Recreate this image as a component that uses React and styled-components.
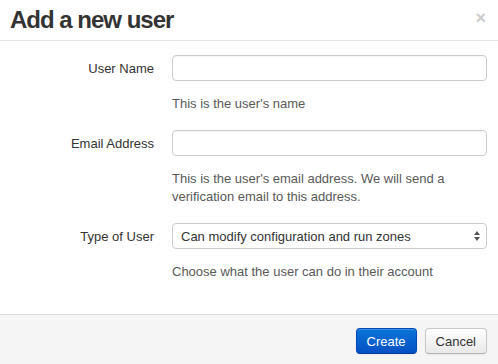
import React from 'react';
import styled, { createGlobalStyle } from 'styled-components';

const GlobalStyle = createGlobalStyle`
  html, body {
    margin: 0;
    padding: 0;
    background: #fff;
  }
  body {
    font-family: "Liberation Sans", Arial, Helvetica, sans-serif;
    font-size: 13px;
    color: #333;
  }
`;

const Modal = styled.div`
  display: flex;
  flex-direction: column;
  min-height: 100vh;
  background: #fff;
`;

const Header = styled.div`
  display: flex;
  align-items: center;
  justify-content: space-between;
  height: 40px;
  padding: 0 12px 0 10px;
  border-bottom: 1px solid #e5e5e5;
`;

const Title = styled.h3`
  margin: 0;
  font-size: 24px;
  font-weight: bold;
  letter-spacing: -1px;
  color: #333;
  line-height: 40px;
`;

const Close = styled.button`
  border: 0;
  background: none;
  padding: 0;
  font-family: "Liberation Sans", Arial, sans-serif;
  font-size: 18px;
  font-weight: bold;
  line-height: 20px;
  color: #000;
  opacity: 0.2;
  cursor: pointer;
  margin-top: -4px;
`;

const Body = styled.div`
  flex: 1;
  padding: 14px 11px 0 14px;
`;

const Group = styled.div`
  display: grid;
  grid-template-columns: 140px 1fr;
  column-gap: 18px;
  margin-bottom: 17px;
`;

const Label = styled.label`
  display: flex;
  align-items: center;
  justify-content: flex-end;
  height: 26px;
  color: #333;
  white-space: nowrap;
`;

const Input = styled.input`
  box-sizing: border-box;
  width: 100%;
  height: 26px;
  border: 1px solid #ccc;
  border-radius: 4px;
  padding: 4px 8px;
  font: inherit;
  box-shadow: inset 0 1px 1px rgba(0, 0, 0, 0.04);
  outline: none;
`;

const SelectWrap = styled.div`
  position: relative;
  height: 26px;
`;

const Select = styled.select`
  box-sizing: border-box;
  width: 100%;
  height: 26px;
  border: 1px solid #ccc;
  border-radius: 4px;
  padding: 0 24px 0 8px;
  font: inherit;
  color: #333;
  background: #fff;
  appearance: none;
  -webkit-appearance: none;
  outline: none;
`;

const Arrows = styled.svg`
  position: absolute;
  right: 7px;
  top: 8px;
  pointer-events: none;
`;

const Help = styled.div`
  grid-column: 2;
  margin-top: 14px;
  line-height: 18px;
  color: #595959;
`;

const Footer = styled.div`
  display: flex;
  justify-content: flex-end;
  gap: 8px;
  height: 50px;
  box-sizing: border-box;
  padding: 13px 11px 0 0;
  background: #f5f5f5;
  border-top: 1px solid #ddd;
`;

const Button = styled.button`
  box-sizing: border-box;
  height: 26px;
  padding: 0 10px;
  font-family: "Liberation Sans", Arial, sans-serif;
  font-size: 13px;
  border-radius: 4px;
  cursor: pointer;
  color: ${p => (p.$primary ? '#fff' : '#333')};
  border: 1px solid ${p => (p.$primary ? '#0348b8' : '#c8c8c8')};
  border-bottom-color: ${p => (p.$primary ? '#023a96' : '#b3b3b3')};
  background: ${p =>
    p.$primary
      ? 'linear-gradient(to bottom, #0a74d8, #0450c4)'
      : 'linear-gradient(to bottom, #ffffff, #e8e8e8)'};
  box-shadow: inset 0 1px 0 rgba(255, 255, 255, 0.2), 0 1px 2px rgba(0, 0, 0, 0.05);
`;

export default function App() {
  return (
    <>
      <GlobalStyle />
      <Modal>
        <Header>
          <Title>Add a new user</Title>
          <Close aria-label="Close">×</Close>
        </Header>
        <Body>
          <Group>
            <Label htmlFor="username">User Name</Label>
            <Input id="username" type="text" />
            <Help>This is the user's name</Help>
          </Group>
          <Group>
            <Label htmlFor="email">Email Address</Label>
            <Input id="email" type="email" />
            <Help>
              This is the user's email address. We will send a
              <br />
              verification email to this address.
            </Help>
          </Group>
          <Group>
            <Label htmlFor="type">Type of User</Label>
            <SelectWrap>
              <Select id="type" defaultValue="modify">
                <option value="modify">Can modify configuration and run zones</option>
                <option value="run">Can run zones</option>
                <option value="view">Can view only</option>
              </Select>
              <Arrows width="6" height="10" viewBox="0 0 6 10">
                <path d="M3 0 L6 4 L0 4 Z" fill="#555" />
                <path d="M0 6 L6 6 L3 10 Z" fill="#555" />
              </Arrows>
            </SelectWrap>
            <Help>Choose what the user can do in their account</Help>
          </Group>
        </Body>
        <Footer>
          <Button $primary>Create</Button>
          <Button>Cancel</Button>
        </Footer>
      </Modal>
    </>
  );
}
